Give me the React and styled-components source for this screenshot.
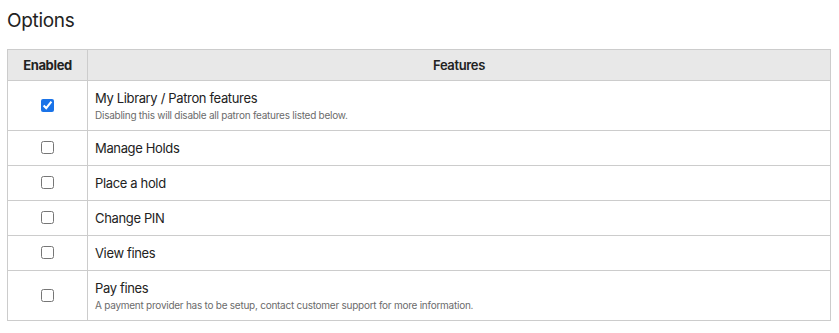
import styled, { createGlobalStyle } from 'styled-components';
import { useState } from 'react';

const GlobalStyle = createGlobalStyle`
  body {
    margin: 0;
    background: #fff;
    font-family: Inter, "Liberation Sans", sans-serif;
    color: #222;
  }
`;

const Page = styled.div`
  padding: 9px 8px 0 7px;
`;

const Title = styled.h2`
  margin: 0 0 17px;
  font-size: 19px;
  font-weight: 400;
  line-height: 23px;
  letter-spacing: -0.3px;
  color: #222;
`;

const Table = styled.table`
  width: 824px;
  border-collapse: collapse;
  font-size: 13px;
  letter-spacing: -0.35px;
`;

const HeadCell = styled.th`
  height: 30px;
  padding: 0;
  background: #e8e8e8;
  border: 1px solid #ccc;
  font-weight: ${(p) => (p.bold ? 700 : 600)};
  text-align: center;
  color: #222;
  width: ${(p) => (p.narrow ? '79px' : 'auto')};
`;

const Cell = styled.td`
  height: ${(p) => (p.tall ? '49px' : '34px')};
  padding: 0 7px;
  border: 1px solid #ccc;
  vertical-align: middle;
  text-align: ${(p) => (p.center ? 'center' : 'left')};
`;

const Check = styled.input`
  width: 13px;
  height: 13px;
  margin: 2px 0 0;
  accent-color: #1a73e8;
`;

const Label = styled.div`
  line-height: 16px;
  color: #222;
`;

const Hint = styled.div`
  margin-top: 3px;
  font-size: 10px;
  line-height: 13px;
  color: #6b6b6b;
  letter-spacing: -0.25px;
`;

const features = [
  { name: 'My Library / Patron features', hint: 'Disabling this will disable all patron features listed below.', on: true },
  { name: 'Manage Holds' },
  { name: 'Place a hold' },
  { name: 'Change PIN' },
  { name: 'View fines' },
  { name: 'Pay fines', hint: 'A payment provider has to be setup, contact customer support for more information.' },
];

export default function App() {
  const [state, setState] = useState(features.map((f) => !!f.on));

  const toggle = (i) => setState((s) => s.map((v, j) => (j === i ? !v : v)));

  return (
    <Page>
      <GlobalStyle />
      <Title>Options</Title>
      <Table>
        <thead>
          <tr>
            <HeadCell narrow bold>Enabled</HeadCell>
            <HeadCell>Features</HeadCell>
          </tr>
        </thead>
        <tbody>
          {features.map((f, i) => (
            <tr key={f.name}>
              <Cell center tall={!!f.hint}>
                <Check type="checkbox" checked={state[i]} onChange={() => toggle(i)} />
              </Cell>
              <Cell tall={!!f.hint}>
                <Label>{f.name}</Label>
                {f.hint && <Hint>{f.hint}</Hint>}
              </Cell>
            </tr>
          ))}
        </tbody>
      </Table>
    </Page>
  );
}
